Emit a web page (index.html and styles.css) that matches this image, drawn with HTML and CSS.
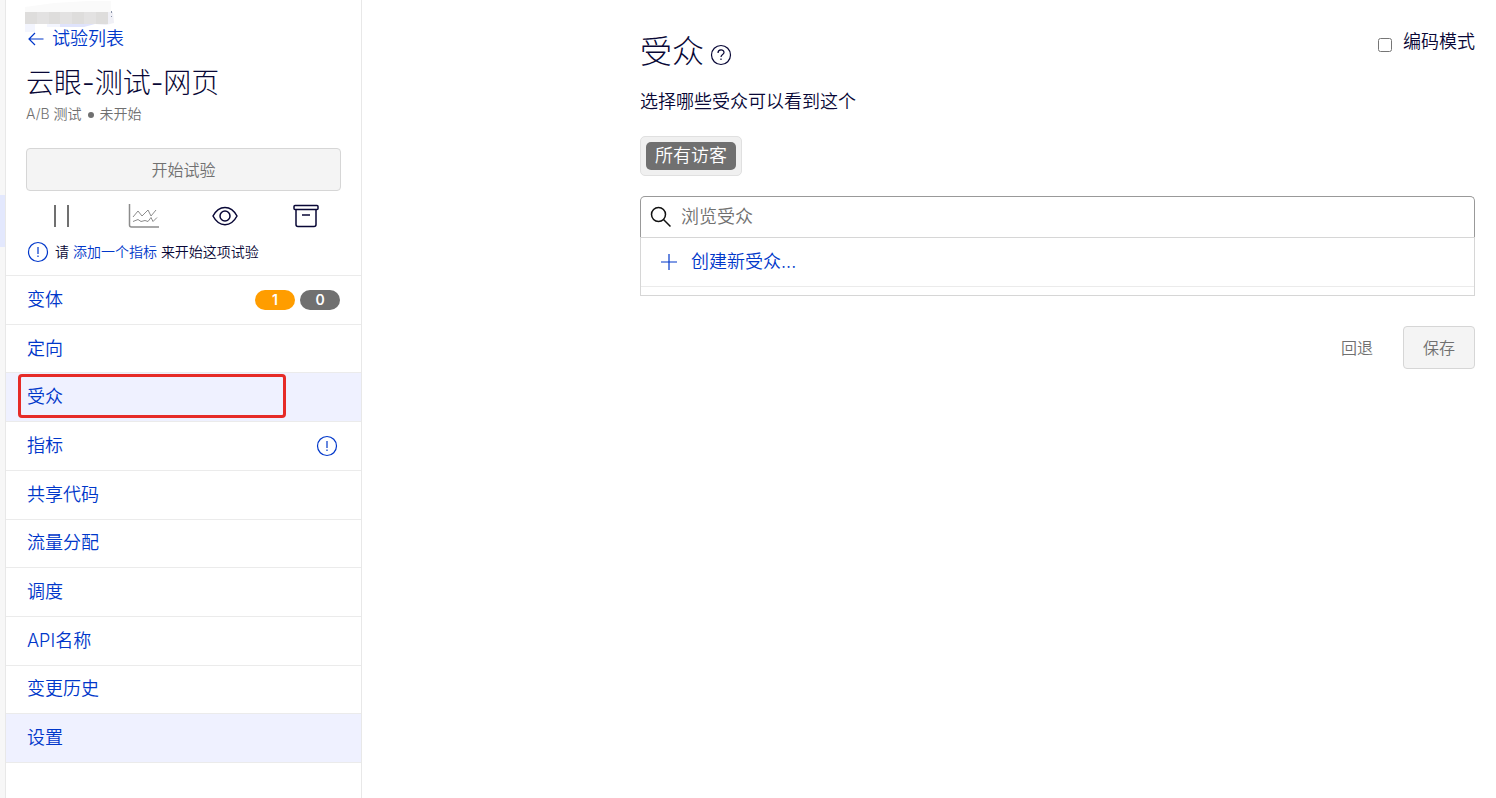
FILE: index.html
```
<!DOCTYPE html>
<html lang="zh-CN">
<head>
    <meta charset="UTF-8">
    <meta name="viewport" content="width=device-width, initial-scale=1.0">
    <title>云眼-测试-网页</title>
    <link rel="stylesheet" href="styles.css">
</head>
<body>
    <div class="rail">
        <div class="rail-active"></div>
    </div>

    <aside class="sidebar">
        <header class="summary">
            <svg class="project-mask" viewBox="0 0 92 34" aria-hidden="true">
                <path fill="#fafafa" d="M1 7 30 3 64 1h23v11H1z"/>
                <path fill="#f3f5fe" d="M1 24h10v8H1zM23 24h13v3H23z"/>
                <path fill="#dfe3fb" d="M36 24h35l-11 3H36z"/>
                <path fill="#f0f0f6" d="M71 24V12h18l1 11-8 2z"/>
                <path fill="#dedddc" d="M1 12h83v12H1z"/>
                <path fill="#e3e2e2" d="M13 12h12v12H13zM36 12h12v12H36zM60 12h12v12H60z"/>
                <path fill="#8a93a8" d="M87 11h1v2h-1zM87 16h1v1h-1z"/>
            </svg>
            <a class="back" href="#">
                <svg class="back-icon" viewBox="0 0 16 14" aria-hidden="true"><path d="M15.500 7H1M7 1 1 7l6 6"/></svg>
                试验列表
            </a>
            <h2 class="name">云眼-测试-网页</h2>
            <p class="meta">A/B 测试 <span class="dot"></span> 未开始</p>
            <button class="btn start" type="button">开始试验</button>
            <div class="tools">
                <button class="tool" type="button" aria-label="暂停">
                    <svg class="muted" width="32" height="24" viewBox="0 0 32 24"><path d="M9 1v22M22 1v22" stroke-width="2"/></svg>
                </button>
                <button class="tool" type="button" aria-label="结果">
                    <svg class="thin" width="32" height="24" viewBox="0 0 32 24"><path d="M2.500 0v21q0 2 2 2H32" stroke-width="1.500"/><path d="M6 13l5-6 4 5 6-6 3 6 5-6M6 17.500l5-2 3 2 4-1 3 1 3-4 2 4 4-4"/></svg>
                </button>
                <button class="tool" type="button" aria-label="预览">
                    <svg width="32" height="24" viewBox="0 0 32 24"><path d="M4 12C10 .500 22 .500 28 12 22 23.500 10 23.500 4 12z"/><circle cx="16" cy="12" r="5"/></svg>
                </button>
                <button class="tool" type="button" aria-label="归档">
                    <svg width="32" height="24" viewBox="0 0 32 24"><rect x="4" y="1.500" width="24" height="4" rx="1"/><path d="M6 5.500v15q0 2 2 2h16q2 0 2-2v-15M12 11h8"/></svg>
                </button>
            </div>
            <p class="notice">
                <svg class="alert-icon" viewBox="0 0 22 22" aria-hidden="true"><circle cx="11" cy="11" r="9.500"/><path d="M11 6v7M11 14.500v1.500"/></svg>
                <span>请 <a href="#">添加一个指标</a> 来开始这项试验</span>
            </p>
        </header>

        <nav>
            <ul class="menu">
                <li><a href="#">变体 <span class="badges"><span class="badge warn">1</span><span class="badge">0</span></span></a></li>
                <li><a href="#">定向</a></li>
                <li class="active marked"><a href="#">受众</a></li>
                <li>
                    <a href="#">指标
                        <svg class="alert-icon" viewBox="0 0 22 22" aria-hidden="true"><circle cx="11" cy="11" r="9.500"/><path d="M11 6v7M11 14.500v1.500"/></svg>
                    </a>
                </li>
                <li><a href="#">共享代码</a></li>
                <li><a href="#">流量分配</a></li>
                <li><a href="#">调度</a></li>
                <li><a href="#">API名称</a></li>
                <li><a href="#">变更历史</a></li>
                <li class="active"><a href="#">设置</a></li>
            </ul>
        </nav>
    </aside>

    <main class="content">
        <div class="top">
            <h1>受众
                <svg class="help-icon" viewBox="0 0 22 22" aria-hidden="true"><circle cx="11" cy="11" r="9.500"/><path d="M8 9c0-4 6-4 6-.500 0 2-3 2-3 4.500M11 14.500v1.500"/></svg>
            </h1>
            <label class="code-mode"><input type="checkbox"> 编码模式</label>
        </div>
        <p class="lead">选择哪些受众可以看到这个</p>
        <div class="picked"><span class="token">所有访客</span></div>

        <div class="search">
            <svg class="search-icon" viewBox="0 0 22 22" aria-hidden="true"><circle cx="8.500" cy="8.500" r="7"/><path d="m13.500 13.500 7 7"/></svg>
            <input type="text" placeholder="浏览受众" aria-label="浏览受众">
        </div>
        <div class="results">
            <button class="create" type="button">
                <svg class="plus-icon" viewBox="0 0 16 16" aria-hidden="true"><path d="M8 0v16M0 8h16"/></svg>
                创建新受众...
            </button>
        </div>

        <div class="actions">
            <button class="btn plain" type="button">回退</button>
            <button class="btn" type="button">保存</button>
        </div>
    </main>
</body>
</html>
```
FILE: styles.css
```
*, *::after {
    box-sizing: border-box;
}

body {
    margin: 0;
    min-height: 100vh;
    display: flex;
    font-family: Inter, "Noto Sans CJK SC", sans-serif;
    font-size: 18px;
    font-weight: 350;
    line-height: 26px;
    color: #080736;
    background: #fff;
}

h1, h2, p, ul {
    margin: 0;
    padding: 0;
}

h1, h2 {
    font-weight: 300;
}

a {
    color: #0037ca;
    text-decoration: none;
}

button, input {
    font: inherit;
    color: inherit;
}

button {
    cursor: pointer;
}

svg {
    display: block;
    flex: none;
    fill: none;
    stroke: currentColor;
    stroke-width: 1.5;
}

.rail {
    width: 5px;
    padding-top: 195px;
    background: #f7f7f7;
}

.rail-active {
    height: 52px;
    background: #e3e8fd;
}

.sidebar {
    width: 357px;
    flex: none;
    border-left: 1px solid #e8e8e8;
    border-right: 1px solid #e8e8e8;
}

.summary {
    padding: 0 20px 10px;
}

.project-mask {
    width: 92px;
    height: 34px;
    margin: 0 0 -8px -2px;
    stroke: none;
}

.back {
    position: relative;
    display: flex;
    align-items: center;
    gap: 8px;
    padding-left: 2px;
}

.back-icon {
    width: 16px;
    height: 14px;
    stroke-width: 1.2;
}

.name {
    margin-top: 13px;
    font-size: 28px;
    line-height: 36px;
}

.meta {
    margin-top: 3px;
    font-size: 14px;
    line-height: 20px;
    color: #707070;
}

.dot {
    display: inline-block;
    width: 6px;
    height: 6px;
    margin: 0 2px 1px;
    border-radius: 50%;
    background: #707070;
}

.btn {
    height: 43px;
    padding: 0 19px;
    border: 1px solid #d6d6d6;
    border-radius: 4px;
    background: #f4f4f4;
    color: #707070;
    font-size: 16px;
}

.start {
    width: 100%;
    margin-top: 24px;
}

.tools {
    display: flex;
    justify-content: space-between;
    margin: 13px 19px 0 20px;
}

.tool {
    padding: 0;
    border: 0;
    background: none;
}

.muted {
    color: #707070;
}

.thin {
    color: #8c8c8c;
    stroke-width: 1;
}

.notice {
    display: flex;
    align-items: center;
    gap: 6px;
    margin-top: 11px;
    font-size: 14px;
    line-height: 26px;
}

.alert-icon, .help-icon {
    width: 22px;
    height: 22px;
    color: #0037ca;
    stroke-width: 1.2;
}

.notice .alert-icon {
    margin-left: 1px;
}

.menu {
    display: grid;
    grid-auto-rows: 1fr;
    min-height: 488px;
    border-top: 1px solid #ebebeb;
    list-style: none;
}

.menu li {
    position: relative;
    border-bottom: 1px solid #ebebeb;
}

.menu a {
    display: flex;
    align-items: center;
    justify-content: space-between;
    height: 100%;
    padding: 0 21px;
}

.menu .alert-icon {
    margin-right: 2px;
}

.menu .active {
    background: #eff1ff;
}

.marked::after {
    content: "";
    position: absolute;
    top: 1px;
    left: 12px;
    width: 268px;
    height: 44px;
    border: 3px solid #e62b27;
    border-radius: 4px;
    pointer-events: none;
}

.badges {
    display: flex;
    gap: 5px;
}

.badge {
    width: 40px;
    border-radius: 10px;
    background: #707070;
    color: #fff;
    font-size: 14px;
    font-weight: 600;
    line-height: 20px;
    text-align: center;
}

.warn {
    background: #ff9d00;
}

.content {
    flex: 1;
    padding: 29px 21px 0 278px;
}

.top {
    display: flex;
    justify-content: space-between;
    align-items: flex-start;
}

h1 {
    display: flex;
    align-items: center;
    gap: 6px;
    font-size: 32px;
    line-height: 46px;
}

.help-icon {
    margin-top: 6px;
    color: inherit;
}

.code-mode {
    display: flex;
    align-items: center;
    gap: 11px;
}

.code-mode input {
    width: 14px;
    height: 14px;
    margin: 5px 0 0;
}

.lead {
    margin-top: 14px;
}

.picked {
    display: inline-block;
    margin-top: 21px;
    padding: 5px;
    border: 1px solid #e0e0e0;
    border-radius: 5px;
    background: #f0f0f0;
}

.token {
    display: block;
    padding: 0 9px;
    border-radius: 5px;
    background: #707070;
    color: #fff;
    line-height: 28px;
}

.search {
    display: flex;
    align-items: center;
    gap: 9px;
    height: 41px;
    margin-top: 20px;
    padding: 0 9px;
    border: 1px solid #999;
    border-bottom: 0;
    border-radius: 5px 5px 0 0;
}

.search-icon {
    width: 22px;
    height: 22px;
    color: #111;
}

.search input {
    flex: 1;
    padding: 0;
    border: 0;
    outline: 0;
    background: none;
}

.search input::placeholder {
    color: #707070;
    opacity: 1;
}

.results {
    padding-bottom: 8px;
    border: 1px solid #d6d6d6;
}

.create {
    display: flex;
    align-items: center;
    gap: 14px;
    width: 100%;
    height: 49px;
    padding: 0 20px;
    border: 0;
    border-bottom: 1px solid #ebebeb;
    background: none;
    color: #0037ca;
}

.plus-icon {
    width: 16px;
    height: 16px;
    stroke-width: 1.2;
}

.actions {
    display: flex;
    justify-content: flex-end;
    gap: 10px;
    margin-top: 30px;
}

.plain {
    border-color: transparent;
    background: none;
}
```
